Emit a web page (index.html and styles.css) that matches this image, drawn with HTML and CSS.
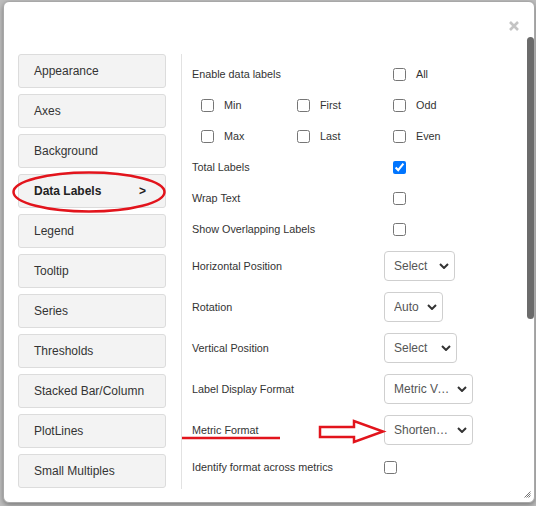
FILE: index.html
```html
<!DOCTYPE html>
<html lang="en">
<head>
<meta charset="utf-8">
<title>Chart settings</title>
<link rel="stylesheet" href="styles.css">
</head>
<body>
<div class="modal">
  <div class="modal-header">
    <button class="close" aria-label="Close">
      <svg width="10" height="10" viewBox="0 0 10 10"><path d="M1 1L9 9M9 1L1 9"/></svg>
    </button>
  </div>
  <div class="modal-body">
    <nav class="nav">
      <button class="nav-item">Appearance</button>
      <button class="nav-item">Axes</button>
      <button class="nav-item">Background</button>
      <button class="nav-item active"><span>Data Labels</span><span>&gt;</span></button>
      <button class="nav-item">Legend</button>
      <button class="nav-item">Tooltip</button>
      <button class="nav-item">Series</button>
      <button class="nav-item">Thresholds</button>
      <button class="nav-item">Stacked Bar/Column</button>
      <button class="nav-item">PlotLines</button>
      <button class="nav-item">Small Multiples</button>
    </nav>
    <div class="panel">
      <div class="checks">
        <div class="crow">
          <span class="lbl">Enable data labels</span>
          <label class="opt c4"><input type="checkbox"><span>All</span></label>
        </div>
        <div class="crow">
          <label class="opt c2"><input type="checkbox"><span>Min</span></label>
          <label class="opt c3"><input type="checkbox"><span>First</span></label>
          <label class="opt c4"><input type="checkbox"><span>Odd</span></label>
        </div>
        <div class="crow">
          <label class="opt c2"><input type="checkbox"><span>Max</span></label>
          <label class="opt c3"><input type="checkbox"><span>Last</span></label>
          <label class="opt c4"><input type="checkbox"><span>Even</span></label>
        </div>
        <div class="crow">
          <span class="lbl">Total Labels</span>
          <label class="opt c4"><input type="checkbox" checked></label>
        </div>
        <div class="crow">
          <span class="lbl">Wrap Text</span>
          <label class="opt c4"><input type="checkbox"></label>
        </div>
        <div class="crow">
          <span class="lbl">Show Overlapping Labels</span>
          <label class="opt c4"><input type="checkbox"></label>
        </div>
      </div>
      <div class="selects">
        <div class="srow">
          <span class="slbl">Horizontal Position</span>
          <div class="select w71"><span class="sel-text">Select</span><svg class="chev" width="10" height="6" viewBox="0 0 10 6"><path d="M1 1L5 5L9 1"/></svg></div>
        </div>
        <div class="srow">
          <span class="slbl">Rotation</span>
          <div class="select w59"><span class="sel-text">Auto</span><svg class="chev" width="10" height="6" viewBox="0 0 10 6"><path d="M1 1L5 5L9 1"/></svg></div>
        </div>
        <div class="srow">
          <span class="slbl">Vertical Position</span>
          <div class="select w73"><span class="sel-text">Select</span><svg class="chev" width="10" height="6" viewBox="0 0 10 6"><path d="M1 1L5 5L9 1"/></svg></div>
        </div>
        <div class="srow">
          <span class="slbl">Label Display Format</span>
          <div class="select w89"><span class="sel-text">Metric Value</span><svg class="chev" width="10" height="6" viewBox="0 0 10 6"><path d="M1 1L5 5L9 1"/></svg></div>
        </div>
        <div class="srow">
          <span class="slbl">Metric Format</span>
          <div class="select w89"><span class="sel-text">Shortened (K, M, B)</span><svg class="chev" width="10" height="6" viewBox="0 0 10 6"><path d="M1 1L5 5L9 1"/></svg></div>
        </div>
      </div>
      <div class="srow last">
        <span class="slbl">Identify format across metrics</span>
        <label class="opt"><input type="checkbox"></label>
      </div>
    </div>
  </div>
  <div class="scroll-thumb"></div>
  <svg class="grip" width="7" height="7" viewBox="0 0 7 7"><path d="M6.5 0.5L0.5 6.5M6.5 2.5L2.5 6.5M6.5 4.5L4.5 6.5"/></svg>
</div>
<svg class="annot" width="536" height="506" viewBox="0 0 536 506">
  <ellipse cx="89" cy="192" rx="75.5" ry="19.5"/>
  <line x1="182" y1="438" x2="280" y2="438"/>
  <polygon points="320,427 354,427 354,421 383,431.5 354,442 354,437 320,437"/>
</svg>
</body>
</html>
```

FILE: styles.css
```css
html, body {
  margin: 0;
  padding: 0;
}
body {
  width: 536px;
  height: 506px;
  overflow: hidden;
  background: #bdbdbd;
  font-family: "Liberation Sans", Arial, sans-serif;
  position: relative;
}
.modal {
  position: relative;
  margin: 1px 0 0 3px;
  width: 532px;
  height: 502px;
  box-sizing: border-box;
  border: 1px solid #a8a8a8;
  border-radius: 6px;
  background: #fff;
  box-shadow: 0 2px 5px rgba(0, 0, 0, 0.35);
  overflow: hidden;
}
.modal-header {
  height: 52px;
  display: flex;
  justify-content: flex-end;
  align-items: flex-start;
}
.close {
  margin: 19px 15px 0 0;
  padding: 0;
  border: 0;
  background: none;
  width: 10px;
  height: 10px;
  display: flex;
}
.close path {
  stroke: #c4c4c4;
  stroke-width: 2.6;
  fill: none;
}
.modal-body {
  display: flex;
  padding-left: 14px;
}
.nav {
  width: 148px;
  display: flex;
  flex-direction: column;
  gap: 6px;
}
.nav-item {
  height: 34px;
  box-sizing: border-box;
  border: 1px solid #dcdcdc;
  border-radius: 3px;
  background: #f3f3f3;
  padding: 0 19px 0 15px;
  text-align: left;
  font-family: "Liberation Sans", Arial, sans-serif;
  font-size: 12px;
  color: #333;
  display: flex;
  align-items: center;
  justify-content: space-between;
}
.nav-item.active {
  font-weight: bold;
  color: #222;
}
.panel {
  margin-left: 15px;
  border-left: 1px solid #e2e2e2;
  padding: 5px 0 0 10px;
  height: 435px;
  box-sizing: border-box;
  flex: 1;
  font-size: 10.8px;
  color: #333;
}
.checks {
  display: flex;
  flex-direction: column;
  gap: 1px;
}
.crow {
  height: 30px;
  display: grid;
  grid-template-columns: 9px 96px 96px 1fr;
  align-items: center;
}
.lbl {
  grid-column: 1 / 4;
  white-space: nowrap;
}
.c2 { grid-column: 2; }
.c3 { grid-column: 3; }
.c4 { grid-column: 4; }
.opt {
  display: flex;
  align-items: center;
  gap: 10px;
}
.opt input {
  margin: 0;
  width: 13px;
  height: 13px;
}
.selects {
  margin-top: 7px;
  display: flex;
  flex-direction: column;
  gap: 11px;
}
.srow {
  height: 30px;
  display: flex;
  align-items: center;
}
.slbl {
  width: 192px;
  flex: none;
  white-space: nowrap;
}
.srow.last {
  margin-top: 7px;
}
.select {
  height: 30px;
  box-sizing: border-box;
  border: 1px solid #cfcfcf;
  border-radius: 4px;
  padding: 0 5px 0 9px;
  display: flex;
  align-items: center;
  gap: 6px;
  font-size: 12px;
  color: #555;
}
.w59 { width: 59px; }
.w71 { width: 71px; }
.w73 { width: 73px; }
.w89 { width: 89px; }
.sel-text {
  flex: 1;
  min-width: 0;
  overflow: hidden;
  white-space: nowrap;
  text-overflow: ellipsis;
}
.chev {
  flex: none;
}
.chev path {
  stroke: #333;
  stroke-width: 2;
  fill: none;
}
.scroll-thumb {
  position: absolute;
  right: 0;
  top: 35px;
  width: 7px;
  height: 282px;
  border-radius: 4px;
  background: #6b6b6b;
}
.grip {
  position: absolute;
  right: 3px;
  bottom: 4px;
}
.grip path {
  stroke: #777;
  stroke-width: 1;
  fill: none;
}
.annot {
  position: absolute;
  left: 0;
  top: 0;
  pointer-events: none;
}
.annot ellipse,
.annot line,
.annot polygon {
  stroke: #e2141c;
  stroke-width: 2.5;
  fill: none;
}
```
